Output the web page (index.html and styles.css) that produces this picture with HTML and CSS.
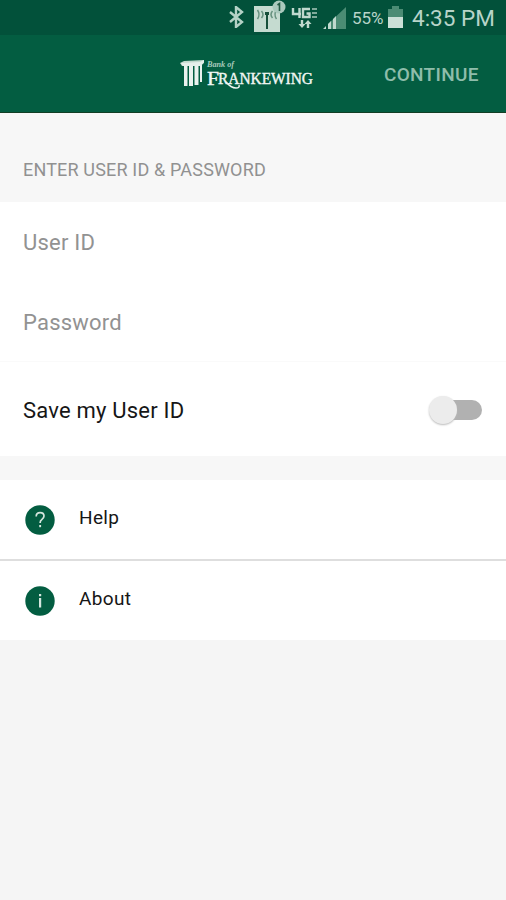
FILE: index.html
```html
<!DOCTYPE html>
<html lang="en">
<head>
<meta charset="utf-8">
<title>Bank of Frankewing</title>
<link rel="stylesheet" href="styles.css">
</head>
<body>
<div class="status">
  <svg class="bluetooth" width="16" height="22" viewBox="0 0 16 22"><path d="M2 6l12 10-6 5V1l6 5L2 16" fill="none" stroke="#b4d2c6" stroke-width="2.4"/></svg>
  <svg class="hotspot" width="34" height="32" viewBox="0 0 34 32">
    <path d="M1 6h26v26H1z" fill="#c5dbd0"/>
    <path d="M14 13v16" stroke="#174f3a" stroke-width="2"/>
    <path d="M12 12h4v3h-4z" fill="#174f3a"/>
    <path d="M8.500 11q3 3.500 0 7M4.500 10q3 4.500 0 9M19.500 11q-3 3.500 0 7M23.500 10q-3 4.500 0 9" fill="none" stroke="#66917f" stroke-width="1.500"/>
    <circle cx="26" cy="7" r="6.500" fill="#aac9bd"/>
    <path d="M24.500 5l2-1.500V11" fill="none" stroke="#235b45" stroke-width="1.600"/>
  </svg>
  <svg class="network" width="28" height="22" viewBox="0 0 28 22">
    <g fill="none" stroke="#c0d9ce" stroke-width="2.400"><path d="M2 1v6h8M8.500 1v10M19 2h-7v8h6.500V6.500h-3"/><path d="M26 2h-5M26 6h-5M26 10h-5" stroke="#80aa9a" stroke-width="1.800"/></g>
    <path d="M11 13v6M17 21v-6" stroke="#c0d9ce" stroke-width="2.400"/><path d="M7.500 17h7L11 21zM13.500 17h7L17 13z" fill="#c0d9ce"/>
  </svg>
  <svg class="signal" width="23" height="22" viewBox="0 0 23 22"><path d="M5 22v-5L23 0v22z" fill="#4b8c74"/><path d="M0 22l3-3v3zM5 22v-5l3-3v8zM10 22V12l3-3v13z" fill="#c0d9ce"/></svg>
  <span class="percent">55%</span>
  <svg class="battery" width="15" height="22" viewBox="0 0 15 22"><path d="M4 0h7v3h4v19H0V3h4z" fill="#4b8c74"/><path d="M0 11h15v11H0z" fill="#cbe0d7"/></svg>
  <span class="clock">4:35 PM</span>
</div>
<header class="bar">
  <svg class="logo" width="136" height="34" viewBox="0 0 136 34">
    <path d="M0 6l4-2 20-1v3l-4 3H2z" fill="#c2d9ce"/>
    <path d="M1 6l19-1 4-2v2l-3 4H3z" fill="#e5efea"/>
    <path d="M4 9h3.500v20H4zM9 9h4v20H9zM14.500 9h4v19h-4zM20 8h2v17h-2z" fill="#eaf2ee"/>
    <text class="logo-small" x="27" y="10" textLength="27" lengthAdjust="spacingAndGlyphs">Bank of</text>
    <text class="logo-cap" x="27" y="27.500" textLength="12" lengthAdjust="spacingAndGlyphs">F</text>
    <text class="logo-name" x="38" y="27" textLength="95" lengthAdjust="spacingAndGlyphs">RANKEWING</text>
    <path d="M46 25q5 6 10 6 4 0 3-3" fill="none" stroke="#eef5f1" stroke-width="1.500"/>
  </svg>
  <span class="continue">CONTINUE</span>
</header>
<main>
  <h1 class="heading">ENTER USER ID &amp; PASSWORD</h1>
  <div class="row field"><span class="user">User ID</span></div>
  <div class="row field password-row"><span class="password">Password</span></div>
  <div class="row save"><span class="save-label">Save my User ID</span><span class="switch"><span class="track"></span><span class="thumb"></span></span></div>
  <nav class="links">
    <div class="link"><svg width="30" height="30" viewBox="0 0 30 30"><circle cx="15" cy="15" r="14.700" fill="#035d41"/><path d="M11.200 11.500q0-3.800 3.900-3.800 3.900 0 3.900 3.400 0 1.800-2 3.300-1.900 1.400-1.900 3.500" fill="none" stroke="#d5e6de" stroke-width="1.700"/><path d="M14.200 20h1.900v2.200h-1.900z" fill="#d5e6de"/></svg><span class="help">Help</span></div>
    <div class="link"><svg width="30" height="30" viewBox="0 0 30 30"><circle cx="15" cy="15" r="14.700" fill="#035d41"/><path d="M14 8h2.200v2.200H14zM14 12h2.200v9.500H14z" fill="#d5e6de"/></svg><span class="about">About</span></div>
  </nav>
</main>
</body>
</html>
```
FILE: styles.css
```css
* { box-sizing: border-box; }
body { margin: 0; height: 900px; overflow: hidden; background: #f5f5f5; font-family: Roboto, sans-serif; color: #161616; }
svg { display: block; flex: none; }
span { white-space: nowrap; }
.status { height: 35px; background: #02513a; display: flex; align-items: flex-start; padding-left: 228px; color: #b8d4c9; }
.bluetooth { margin-top: 6px; }
.hotspot { margin-left: 9px; }
.network { margin: 7px 0 0 4px; }
.signal { margin: 7px 0 0 4px; }
.percent { margin: 7px 0 0 6px; width: 32px; font-size: 17px; line-height: 22px; letter-spacing: -0.1px; }
.battery { margin: 6px 0 0 4px; }
.clock { margin: 4px 0 0 9px; font-size: 22.5px; line-height: 28px; }
.bar { height: 78px; background: #035d41; border-bottom: 1px solid #133e25; display: flex; align-items: flex-start; padding-left: 180px; }
.logo { margin-top: 22px; overflow: visible; }
.logo text { fill: #f1f7f4; font-family: "Liberation Serif", serif; }
.logo .logo-small { font-size: 8.5px; font-style: italic; font-weight: bold; fill: #a8cabc; }
.logo .logo-name { font-size: 16px; stroke: #f1f7f4; stroke-width: 0.4px; }
.logo .logo-cap { font-size: 18px; stroke: #f1f7f4; stroke-width: 0.4px; }
.continue { margin: 28px 0 0 68px; font-size: 19px; line-height: 24px; font-weight: 500; letter-spacing: 0.3px; color: #8fbdab; }
.heading { margin: 0; height: 89px; padding: 46px 0 0 23px; background: #f7f7f7; font-size: 18px; line-height: 22px; font-weight: 400; letter-spacing: 0.17px; color: #919191; }
.row { background: #fff; padding-left: 23px; font-size: 22px; line-height: 28px; letter-spacing: 0.2px; }
.field { height: 80px; padding-top: 27px; color: #929292; }
.password-row { border-bottom: 1px solid #fafafa; }
.save { height: 94px; padding-top: 2px; display: flex; align-items: center; justify-content: space-between; padding-right: 24px; }
.save-label { padding-top: 2px; }
.switch { width: 53px; height: 30px; display: flex; align-items: center; position: relative; }
.track { width: 41px; height: 20px; margin-left: 12px; border-radius: 10px; background: #b1b1b1; }
.thumb { position: absolute; left: 0; top: 1px; width: 28px; height: 28px; border-radius: 50%; background: #ececec; box-shadow: 0 1px 2px #bbb; }
.links { border-top: 24px solid #f7f7f7; }
.link { height: 80px; background: #fff; display: flex; align-items: center; padding-left: 25px; gap: 24px; font-size: 19px; line-height: 24px; letter-spacing: 0.35px; }
.link:first-child { height: 79px; padding-top: 1px; }
.link + .link { border-top: 2px solid #dedede; height: 81px; }
.link span { margin-top: -4px; }
```
